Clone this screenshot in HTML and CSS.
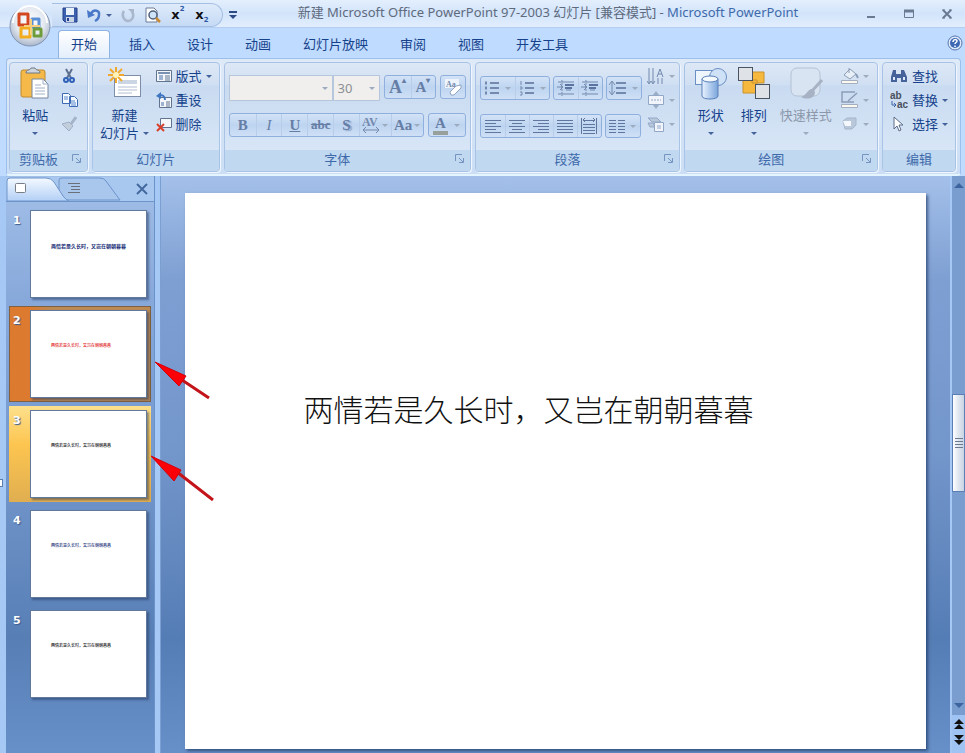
FILE: index.html
```html
<!DOCTYPE html>
<html lang="zh-CN">
<head>
  <meta charset="UTF-8" />
  <title>Microsoft PowerPoint</title>
  <link rel="stylesheet" href="styles.css">
</head>
<body>

  <!-- Title bar -->
  <header class="titlebar">
    <button class="office-btn" aria-label="Office">
      <svg width="42" height="42" viewBox="0 0 42 42">
        <defs>
          <radialGradient id="orb" cx="50%" cy="40%" r="60%">
            <stop offset="0" stop-color="#fff"/><stop offset=".6" stop-color="#e4e9f0"/><stop offset="1" stop-color="#a9b6ca"/>
          </radialGradient>
        </defs>
        <circle cx="21" cy="21" r="20" fill="url(#orb)" stroke="#8295b3"/>
        <path d="M4 18a17 17 0 0 1 34 0" fill="none" stroke="#fff" stroke-width="2"/>
        <g fill="none" stroke-width="3" stroke-linejoin="round">
          <rect x="10" y="9" width="9" height="11" stroke="#d4461f"/>
          <rect x="23" y="14" width="7" height="8" stroke="#5a8fd6"/>
          <rect x="12" y="23" width="9" height="9" stroke="#f2ac1c"/>
          <rect x="25" y="24" width="7" height="7" stroke="#6f9c3a"/>
        </g>
        <path d="M15 21h16M22 14v16" stroke="#f6cf7c" stroke-width="2"/>
      </svg>
    </button>
    <div class="quick">
      <button aria-label="保存"><svg width="16" height="16"><path d="M1 1h14v14H3l-2-2z" fill="#3c5fae" stroke="#24408a"/><path d="M4 1h8v7H4z" fill="#e9f1fb"/><path d="M4 10h8v5H4z" fill="#c9d4e6"/><path d="M5 11h2v3H5z" fill="#24408a"/></svg></button>
      <button aria-label="撤消" class="with-caret"><svg width="16" height="16"><path d="M5 6.500C8 2 14 3 13 8c0 3-2 5-4 6" fill="none" stroke="#4a78c8" stroke-width="2.500"/><path d="M1 3l1 8 7-3z" fill="#4a78c8"/></svg><i class="caret"></i></button>
      <button aria-label="恢复"><svg width="16" height="16"><path d="M4 4C1 8 4 14 8 14s7-5 4-9" fill="none" stroke="#a9b8cd" stroke-width="2.500"/><path d="M8 2h6v6z" fill="#a9b8cd"/></svg></button>
      <button aria-label="打印预览"><svg width="18" height="16"><path d="M2 1h8l3 3v11H2z" fill="#fff" stroke="#6b7c99"/><circle cx="9" cy="8" r="4" fill="#cfe4f7" stroke="#4d5f7e" stroke-width="1.500"/><path d="M12 11l4 4" stroke="#c88b32" stroke-width="2.500"/></svg></button>
      <button aria-label="上标" class="script-btn">x<sup>2</sup></button>
      <button aria-label="下标" class="script-btn">x<sub>2</sub></button>
    </div>
    <button class="customize" aria-label="自定义"><svg width="8" height="8"><path d="M0 1h8" stroke="#2c4b85" stroke-width="2"/><path d="M0 4h8L4 8z" fill="#2c4b85"/></svg></button>
    <h1 class="title">新建 Microsoft Office PowerPoint 97-2003 幻灯片 [兼容模式] - <b>Microsoft PowerPoint</b></h1>
    <div class="window-btns">
      <button aria-label="最小化"><svg width="12" height="12"><path d="M2 9h8" stroke="#6b7a90" stroke-width="2"/></svg></button>
      <button aria-label="最大化"><svg width="12" height="12"><path d="M1.500 2.500h9v7h-9z" fill="none" stroke="#6b7a90"/><path d="M1 3h10" stroke="#6b7a90" stroke-width="3"/></svg></button>
      <button aria-label="关闭"><svg width="12" height="12"><path d="M2 2l8 8M10 2l-8 8" stroke="#6b7a90" stroke-width="2"/><path d="M1 2h3M8 2h3M1 10h3M8 10h3" stroke="#6b7a90"/></svg></button>
    </div>
  </header>

  <!-- Ribbon tabs -->
  <nav class="tabs">
    <a href="#" class="tab active">开始</a>
    <a href="#" class="tab">插入</a>
    <a href="#" class="tab">设计</a>
    <a href="#" class="tab">动画</a>
    <a href="#" class="tab">幻灯片放映</a>
    <a href="#" class="tab">审阅</a>
    <a href="#" class="tab">视图</a>
    <a href="#" class="tab">开发工具</a>
    <button class="help" aria-label="帮助"><svg width="16" height="16"><circle cx="8" cy="8" r="7" fill="#dfeafa" stroke="#5577b0"/><circle cx="8" cy="8" r="5" fill="#3c68b4"/><path d="M6 7c0-3 4-3 4-1 0 1.500-2 1.500-2 3M8 10.500v1.500" fill="none" stroke="#fff" stroke-width="1.500"/></svg></button>
  </nav>

  <!-- Ribbon -->
  <section class="ribbon">
    <div class="group">
      <div class="group-body">
        <button class="big">
          <svg width="34" height="34"><rect x="3" y="4" width="24" height="27" rx="2" fill="#f5b94a" stroke="#c18a2c"/><path d="M8 7c0-4 4-2 5-5h4c1 3 5 1 5 5z" fill="#cfd5de" stroke="#6f7886"/><path d="M14 13h11l5 5v14H14z" fill="#fff" stroke="#75869f"/><path d="M25 13v5h5M17 19h6M17 22h10M17 25h10M17 28h10" fill="none" stroke="#9fb0c8"/></svg>
          <span>粘贴</span><i class="caret"></i>
        </button>
        <div class="stack">
          <button aria-label="剪切"><svg width="16" height="16"><path d="M5 1l5 9M11 1L6 10" stroke="#5d6f8e" stroke-width="2"/><circle cx="5" cy="12" r="2" fill="none" stroke="#2f62b8" stroke-width="2"/><circle cx="11" cy="12" r="2" fill="none" stroke="#2f62b8" stroke-width="2"/></svg></button>
          <button aria-label="复制"><svg width="18" height="16"><path d="M1.500 1.500h6l2 2v8h-8zM8.500 4.500h5l3 3v7h-8z" fill="#f4f9ff" stroke="#3c6ab5"/><path d="M3 5h4M3 7h4M10 9h4M10 11h5M10 13h5" stroke="#5b88cc"/></svg></button>
          <button aria-label="格式刷"><svg width="16" height="16"><path d="M15 1l-5 7" stroke="#a5b3c8" stroke-width="3"/><path d="M1 8l7-2 4 4-4 5z" fill="#c3cedd" stroke="#a0afc5"/></svg></button>
        </div>
      </div>
      <h2 class="group-label with-launcher">剪贴板<svg class="launcher" width="9" height="9"><use href="#launch"/></svg></h2>
    </div>

    <div class="group">
      <div class="group-body">
        <button class="big">
          <svg width="36" height="34"><rect x="7.500" y="9.500" width="26" height="21" fill="#fff" stroke="#7e8ea7"/><path d="M11 14h19v4H11z" fill="#cbd5e4"/><path d="M11 21h19M11 24h19M11 27h14" stroke="#b1bfd3"/><path d="M9 1v16M1 9h16M3 3l12 12M15 3L3 15" stroke="#f0a92c" stroke-width="2"/><circle cx="9" cy="9" r="3" fill="#fff3b8"/></svg>
          <span>新建</span><span>幻灯片<i class="caret"></i></span>
        </button>
        <div class="stack">
          <button><svg width="16" height="16"><path d="M.5 2.500h15v11H.5z" fill="#f3f7fc" stroke="#60738f"/><path d="M2 5h12" stroke="#7b91b3" stroke-width="2"/><path d="M3 7h4v5H3z" fill="#9eb3d2"/><path d="M9 8h5M9 10h5M9 12h5" stroke="#60738f"/></svg>版式<i class="caret"></i></button>
          <button><svg width="16" height="16"><path d="M3.500 5.500h12v10h-12z" fill="#f3f7fc" stroke="#60738f"/><path d="M5 10h3v4H5z" fill="#9eb3d2"/><path d="M10 10h4M10 12h4M10 14h4" stroke="#60738f"/><path d="M3 4c3-2 6 0 6 4" fill="none" stroke="#3f76c4" stroke-width="2"/><path d="M0 4l5-4v7z" fill="#3f76c4"/></svg>重设</button>
          <button><svg width="16" height="16"><path d="M4.500 2.500h11v9h-11z" fill="#f3f7fc" stroke="#60738f"/><path d="M1 8l7 7M8 8l-7 7" stroke="#d9402b" stroke-width="2"/></svg>删除</button>
        </div>
      </div>
      <h2 class="group-label">幻灯片</h2>
    </div>

    <div class="group">
      <div class="group-body rows disabled">
        <div class="row">
          <div class="combo">
            <label class="combo-font"><select aria-label="字体"><option></option></select><i class="caret"></i></label>
            <label class="combo-size"><select aria-label="字号"><option>30</option></select><i class="caret"></i></label>
          </div>
          <div class="btns">
            <button class="glyph large" aria-label="增大字号">A<sup>▴</sup></button>
            <button class="glyph" aria-label="减小字号">A<sup>▾</sup></button>
          </div>
          <div class="btns"><button aria-label="清除格式"><svg width="18" height="18"><path d="M1 1h14v9H1z" fill="#eef4fc"/><text x="2" y="9" class="tiny">Aa</text><path d="M6 14l6-6 5-1v3l-7 7H7z" fill="#fff" stroke="#8fa3c2"/></svg></button></div>
        </div>
        <div class="row">
          <div class="btns fill">
            <button class="glyph"><b>B</b></button>
            <button class="glyph"><em>I</em></button>
            <button class="glyph"><u>U</u></button>
            <button class="glyph"><s>abc</s></button>
            <button class="glyph shadow"><b>S</b></button>
            <button class="glyph wide"><svg width="18" height="18"><text x="0" y="10" class="tiny big-tiny">AV</text><path d="M1 14h16M4 11l-3 3 3 3M14 11l3 3-3 3" fill="none" stroke="#7389ad"/></svg><i class="caret"></i></button>
            <button class="glyph wide">Aa<i class="caret"></i></button>
          </div>
          <div class="btns"><button class="glyph color"><span>A</span><i class="caret"></i></button></div>
        </div>
      </div>
      <h2 class="group-label with-launcher">字体<svg class="launcher" width="9" height="9"><use href="#launch"/></svg></h2>
    </div>

    <div class="group">
      <div class="group-body tight disabled">
        <div class="rows para">
          <div class="row">
            <div class="btns">
              <button class="mid" aria-label="项目符号"><svg width="16" height="16"><path d="M6 3h9M6 8h9M6 13h9" stroke="#7389ad" stroke-width="2"/><path d="M1 3h2M1 8h2M1 13h2" stroke="#7389ad" stroke-width="3"/></svg><i class="caret"></i></button>
              <button class="mid" aria-label="编号"><svg width="16" height="16"><path d="M6 3h9M6 8h9M6 13h9" stroke="#7389ad" stroke-width="2"/><path d="M2 1v4M1 7h2v2H1M1 12h2v3H1" fill="none" stroke="#7389ad"/></svg><i class="caret"></i></button>
            </div>
            <div class="btns">
              <button aria-label="减少缩进"><svg width="18" height="18"><use href="#indent"/></svg></button>
              <button aria-label="增加缩进"><svg width="18" height="18"><use href="#indent"/></svg></button>
            </div>
            <div class="btns"><button class="mid" aria-label="行距"><svg width="18" height="16"><path d="M7 3h10M7 8h10M7 13h10" stroke="#7389ad" stroke-width="2"/><path d="M3 2v12M0 5l3-4 3 4M0 11l3 4 3-4" fill="none" stroke="#7389ad"/></svg><i class="caret"></i></button></div>
          </div>
          <div class="row">
            <div class="btns">
              <button aria-label="左对齐"><svg width="16" height="14"><path d="M0 1.500h16M0 4.500h11M0 7.500h16M0 10.500h11M0 13.500h16" stroke="#5f779f"/></svg></button>
              <button aria-label="居中"><svg width="16" height="14"><path d="M0 1.500h16M3 4.500h10M0 7.500h16M3 10.500h10M0 13.500h16" stroke="#5f779f"/></svg></button>
              <button aria-label="右对齐"><svg width="16" height="14"><path d="M0 1.500h16M5 4.500h11M0 7.500h16M5 10.500h11M0 13.500h16" stroke="#5f779f"/></svg></button>
              <button aria-label="两端对齐"><svg width="16" height="14"><path d="M0 1.500h16M0 4.500h16M0 7.500h16M0 10.500h16M0 13.500h16" stroke="#5f779f"/></svg></button>
              <button aria-label="分散对齐"><svg width="18" height="18"><path d="M1.500 1v16M16.500 1v16M3 3.500h12M5 1L3 3l2 2M13 1l2 2-2 2M3 7.500h12M3 10.500h12M3 13.500h12M3 16.500h12" fill="none" stroke="#5f779f"/></svg></button>
            </div>
            <div class="btns"><button class="mid" aria-label="分栏"><svg width="16" height="14"><path d="M0 1.500h7M0 4.500h7M0 7.500h7M0 10.500h7M0 13.500h7M9 1.500h7M9 4.500h7M9 7.500h7M9 10.500h7M9 13.500h7" stroke="#5f779f"/></svg><i class="caret"></i></button></div>
          </div>
        </div>
        <div class="stack">
          <button aria-label="文字方向"><svg width="18" height="18"><path d="M2 1v15M6 1v15M0 14l2 3 2-3M4 14l2 3 2-3M10 10l3-8 3 8M11 7h4M11 11v6M15 11v6" fill="none" stroke="#7389ad"/></svg><i class="caret"></i></button>
          <button aria-label="对齐文本"><svg width="18" height="18"><path d="M1.500 4.500h15v9h-15z" fill="#f1f5fb" stroke="#93a7c6"/><path d="M4 9h10" stroke="#93a7c6" stroke-dasharray="2 1"/><path d="M6 4l3-4 3 4zM6 14l3 4 3-4z" fill="#9bacc6"/></svg><i class="caret"></i></button>
          <button aria-label="SmartArt"><svg width="18" height="18"><path d="M1 3h9l4 4H5zM1 8h6v4H3z" fill="#b9c7db" stroke="#93a7c6"/><path d="M7.500 7.500h9v9h-9z" fill="#f1f5fb" stroke="#93a7c6"/><path d="M10 11h4M10 13h4" stroke="#93a7c6"/></svg><i class="caret"></i></button>
        </div>
      </div>
      <h2 class="group-label with-launcher">段落<svg class="launcher" width="9" height="9"><use href="#launch"/></svg></h2>
    </div>

    <div class="group">
      <div class="group-body">
        <button class="big">
          <svg width="34" height="34"><defs><linearGradient id="cyl"><stop offset="0" stop-color="#e9f3ff"/><stop offset="1" stop-color="#7aa5dc"/></linearGradient></defs><rect x="1.500" y="4.500" width="17" height="14" fill="#eef5fd" stroke="#6a8fc4"/><circle cx="24" cy="11" r="8.500" fill="#cfe1f6" stroke="#6a8fc4"/><path d="M8 13v17c0 4 16 4 16 0V13z" fill="url(#cyl)" stroke="#5a80b9"/><ellipse cx="16" cy="13" rx="8" ry="3" fill="#f5faff" stroke="#5a80b9"/></svg>
          <span>形状</span><i class="caret"></i>
        </button>
        <button class="big">
          <svg width="34" height="34"><path d="M15 6h12v11H15zM6 14h14v13H6z" fill="#f6b93d" stroke="#ca922c"/><rect x="1.500" y="1.500" width="14" height="13" fill="#dfe3e8" stroke="#4a5362"/><rect x="18.500" y="18.500" width="14" height="14" fill="#dfe3e8" stroke="#4a5362"/></svg>
          <span>排列</span><i class="caret"></i>
        </button>
        <button class="big disabled" disabled>
          <svg width="36" height="34"><rect x="3" y="2" width="29" height="28" rx="6" fill="#d9e4f2" stroke="#b4c1d3"/><path d="M34 14L24 25" stroke="#a7b3c4" stroke-width="3"/><path d="M25 23c-5-1-6 6-12 8 5 3 14 2 14-5z" fill="#a7b3c4"/></svg>
          <span>快速样式</span><i class="caret"></i>
        </button>
        <div class="stack disabled">
          <button aria-label="形状填充"><svg width="18" height="18"><path d="M3 8l6-6 6 5-6 5zM8 1v5" fill="#e9eff7" stroke="#8b9db8"/><path d="M15 7l2 4" stroke="#8b9db8" stroke-width="2"/><path d="M.5 13.500h16v3H.5z" fill="#faf8ef" stroke="#a3afc0"/></svg><i class="caret"></i></button>
          <button aria-label="形状轮廓"><svg width="18" height="18"><path d="M14 1H1v10h12M16 2L7 10" fill="none" stroke="#8b9db8" stroke-width="1.500"/><path d="M.5 13.500h16v3H.5z" fill="#faf8ef" stroke="#a3afc0"/></svg><i class="caret"></i></button>
          <button aria-label="形状效果"><svg width="18" height="18"><path d="M2 6l4-3h9v7l-4 4H4z" fill="#b9c7da" stroke="#a6b6cb"/><path d="M2 6h8v5H4z" fill="#f4f7fb"/></svg><i class="caret"></i></button>
        </div>
      </div>
      <h2 class="group-label with-launcher">绘图<svg class="launcher" width="9" height="9"><use href="#launch"/></svg></h2>
    </div>

    <div class="group">
      <div class="group-body">
        <div class="stack">
          <button><svg width="18" height="16"><path d="M3 2h3v4h5V2h3l3 7v5h-6v-4H7v4H1V9z" fill="#46629a"/><path d="M3 9h2v3H3zM13 9h2v3h-2z" fill="#dbe8fa"/></svg>查找</button>
          <button><svg width="18" height="18"><text x="0" y="8" class="ab">ab</text><text x="7" y="17" class="ab">ac</text><path d="M2 10v4h4M4 12l2 2-2 2" fill="none" stroke="#3d62a8"/></svg>替换<i class="caret"></i></button>
          <button><svg width="18" height="16"><path d="M4 1v12l3-3 2 5 2-1-2-5h4z" fill="#fff" stroke="#5b6c88"/></svg>选择<i class="caret"></i></button>
        </div>
      </div>
      <h2 class="group-label">编辑</h2>
    </div>
  </section>

  <!-- Workspace -->
  <main class="workspace">
    <div class="grip"></div>
    <aside class="panel">
      <div class="panel-tabs">
        <svg width="118" height="24" viewBox="0 0 118 24"><defs><linearGradient id="pt" x2="0" y2="1"><stop offset="0" stop-color="#f4f9ff"/><stop offset="1" stop-color="#b3d0f6"/></linearGradient></defs><path d="M53 23V3q0-2 3-2h38q4 0 6 3l14 19z" fill="#a9c6ec" stroke="#6d94cb"/><path d="M1 24V4q0-3 3-3h36q5 0 8 4l9 14q3 4 6 5z" fill="url(#pt)" stroke="#6d94cb"/><rect x="9.500" y="6.500" width="10" height="9" rx="1" fill="#fff" stroke="#7a7f87"/><path d="M62 6.500h12M65 9.500h9M65 12.500h9M62 15.500h12" stroke="#6b7078"/></svg>
        <button aria-label="关闭"><svg width="12" height="12"><path d="M1 1l10 10M11 1L1 11" stroke="#44699f" stroke-width="2"/></svg></button>
      </div>
      <ol class="thumbs">
        <li class="thumb"><span>1</span><p class="mini bold navy">两情若是久长时，又岂在朝朝暮暮</p></li>
        <li class="thumb selected"><span>2</span><p class="mini red">两情若是久长时，又岂在朝朝暮暮</p></li>
        <li class="thumb hover"><span>3</span><p class="mini">两情若是久长时，又岂在朝朝暮暮</p></li>
        <li class="thumb"><span>4</span><p class="mini navy">两情若是久长时，又岂在朝朝暮暮</p></li>
        <li class="thumb"><span>5</span><p class="mini">两情若是久长时，又岂在朝朝暮暮</p></li>
      </ol>
    </aside>
    <div class="stage">
      <article class="slide"><p>两情若是久长时，又岂在朝朝暮暮</p></article>
    </div>
    <div class="scrollbar">
      <svg class="arrow-up" width="10" height="6"><path d="M0 6h10L5 1z" fill="#3c659f"/></svg>
      <div class="track"><div class="handle"></div></div>
      <svg width="10" height="6"><path d="M0 0h10L5 5z" fill="#3c659f"/></svg>
      <div class="jump">
        <svg width="10" height="10"><path d="M0 5h10L5 0zM0 10h10L5 5z" fill="#111"/></svg>
        <svg width="10" height="10"><path d="M0 0h10L5 5zM0 5h10l-5 5z" fill="#111"/></svg>
      </div>
    </div>

    <!-- Callout arrows over the thumbnails -->
    <svg class="callouts" width="64" height="142" viewBox="0 0 64 142">
      <path d="M28 19l30 20M26 113l36 28" stroke="#c3141b" stroke-width="3"/>
      <path d="M4 3l31 14-7 10zM0 97l30 14-7 11z" fill="#fb0007" stroke="#d3000b"/>
    </svg>
  </main>

  <svg width="0" height="0" class="sprite">
    <symbol id="launch" viewBox="0 0 9 9"><path d="M.5 7V.5H7M4 4l4 4M8.500 4v4.500H4" fill="none" stroke="#7694c0"/></symbol>
    <symbol id="indent" viewBox="0 0 18 18"><path d="M5 1v16" stroke="#7389ad" stroke-dasharray="2 1"/><path d="M1 3h16M9 11h5M1 15h16" stroke="#7389ad"/><path d="M8 6h9M8 9h7" stroke="#5b73a0" stroke-width="2"/><path d="M0 8h6M3 5l3 3-3 3" fill="none" stroke="#7389ad"/></symbol>
  </svg>

</body>
</html>
```
FILE: styles.css
```css
* { margin: 0; padding: 0; box-sizing: border-box; }

body {
  min-height: 100vh;
  display: flex;
  flex-direction: column;
  overflow: hidden;
  background: #bfdbff;
  color: #15428b;
  font-family: "Noto Sans", "Noto Sans CJK SC", sans-serif;
  font-size: 13px;
  line-height: 18px;
}

button {
  display: flex;
  align-items: center;
  justify-content: center;
  background: none;
  border: 0;
  color: inherit;
  font: inherit;
  white-space: nowrap;
}

svg { display: block; flex: none; }
.sprite { position: absolute; }

.caret {
  flex: none;
  display: inline-block;
  width: 0;
  height: 0;
  border: 3px solid transparent;
  border-top-color: #44639a;
  border-bottom: 0;
}

/* title bar */
.titlebar {
  position: relative;
  height: 28px;
  display: flex;
  align-items: center;
  padding: 3px 0 0 52px;
  background: linear-gradient(#e4effd, #d2e4fb 50%, #e2eefd);
  border-bottom: 1px solid #b4cdf0;
}

.office-btn {
  position: absolute;
  left: 9px;
  top: 5px;
  z-index: 2;
}

.quick {
  height: 24px;
  display: flex;
  align-items: center;
  gap: 8px;
  padding: 0 12px 0 10px;
  background: linear-gradient(#dfebfa, #c5daf5);
  border: 1px solid #a3bfe4;
  border-left: 0;
  border-radius: 0 12px 12px 0;
}

.with-caret { gap: 4px; }

.script-btn {
  width: 16px;
  color: #111;
  font-family: "DejaVu Sans", sans-serif;
  font-weight: bold;
}

.script-btn sup, .script-btn sub {
  font-size: 7px;
  line-height: 7px;
  color: #2c57a6;
}
.script-btn sup { align-self: flex-start; }
.script-btn sub { align-self: flex-end; }

.customize { margin-left: 6px; }

.title {
  flex: 1;
  text-align: center;
  padding: 0 6px 6px 0;
  font-size: 13px;
  font-weight: normal;
  color: #5f6b7d;
  white-space: nowrap;
}

.title b { font-weight: normal; color: #3e6aaa; }

.window-btns {
  display: flex;
  gap: 26px;
  padding: 0 12px 2px 0;
}

/* ribbon tabs */
.tabs {
  height: 30px;
  display: flex;
  align-items: flex-end;
  gap: 6px;
  padding: 0 2px 0 58px;
}

.tab {
  height: 28px;
  padding: 4px 12px 0;
  border: 1px solid transparent;
  color: #15428b;
  text-decoration: none;
}

.tab.active {
  background: linear-gradient(#fff, #e3eefb);
  border-color: #8fb3e3;
  border-bottom: 0;
  border-radius: 4px 4px 0 0;
}

.help { margin-left: auto; align-self: center; }

/* ribbon */
.ribbon {
  display: grid;
  grid-template-columns: 79fr 128fr 247fr 206fr 194fr 74fr;
  gap: 4px;
  margin: 0 4px 0 6px;
  padding: 3px 4px 2px 2px;
  background: linear-gradient(#dfeaf8, #cbdef5);
  border: 1px solid #9dbfeb;
  border-bottom: 2px solid #e4f5ff;
  border-radius: 4px;
}

.group {
  min-width: 0;
  display: flex;
  flex-direction: column;
  border: 1px solid #a8c3e6;
  border-radius: 4px;
  background: linear-gradient(#dde8f6, #d0dff2 20%, #c9dbf1 21%, #dce9f8);
  box-shadow: 1px 1px 0 #eff6fe;
  overflow: hidden;
}

.group-body {
  height: 87px;
  display: flex;
  align-items: flex-start;
  justify-content: space-around;
  padding: 1px 4px;
}

.group-body.tight { justify-content: space-between; }

.group-label {
  position: relative;
  height: 21px;
  background: #c1d8f1;
  color: #3e6aaa;
  font-size: 13px;
  font-weight: normal;
  text-align: center;
}

.with-launcher { padding-right: 20px; }
.launcher { position: absolute; right: 6px; top: 4px; }

.big {
  flex-direction: column;
  justify-content: flex-start;
  padding-top: 2px;
}

.big svg { margin-bottom: 6px; }
.big > .caret { margin-top: 8px; }
.big span .caret { margin: 0 0 3px 4px; }
.big.disabled { color: #8c98aa; }

.stack {
  display: flex;
  flex-direction: column;
}

.stack button {
  height: 24px;
  gap: 4px;
  justify-content: flex-start;
}

.disabled .caret, .disabled.big .caret { border-top-color: #9dabbf; }

.rows {
  display: flex;
  flex-direction: column;
  gap: 12px;
}

.group-body.rows {
  align-items: stretch;
  justify-content: flex-start;
}

.group-body.rows, .para { padding-top: 12px; }

.row { display: flex; gap: 3px; height: 26px; }
.group-body.rows .row { gap: 4px; }

.combo { flex: 1; display: flex; }

.combo label {
  position: relative;
  border: 1px solid #b6c6dc;
  background: #f0efed;
}

.combo-font { flex: 7; }
.combo-size { flex: 3; }

.combo select {
  width: 100%;
  height: 100%;
  padding-left: 3px;
  appearance: none;
  border: 0;
  background: none;
  color: #8c8f94;
  font: inherit;
}

.combo .caret {
  position: absolute;
  right: 4px;
  top: 11px;
}

.btns {
  height: 24px;
  display: flex;
  border: 1px solid #8fb0de;
  border-radius: 3px;
  background: linear-gradient(#d3e3f7, #bdd4f0 50%, #cfe0f6);
}

.btns.fill { flex: 1; }
.btns.fill button { flex: 1 1 26px; }
.btns.fill .wide { flex-basis: 32px; }

.btns button {
  width: 24px;
  gap: 2px;
  color: #667ea6;
}

.btns button + button { border-left: 1px solid #b7cdea; }
.btns .mid { width: 34px; }
.para .mid { gap: 5px; }

.btns .glyph {
  font-family: "Liberation Serif", serif;
  font-size: 15px;
  font-weight: bold;
}
.btns .glyph.large { width: 26px; font-size: 18px; }
.btns .glyph sup { align-self: flex-start; font-size: 8px; line-height: 10px; }
.glyph.large, .glyph.large + .glyph { gap: 0; }
.btns .glyph s { font-size: 13px; }
.glyph em { font-weight: normal; }
.glyph.shadow b { text-shadow: 2px 1px 1px #8ea5c9; }
.btns .color { width: 36px; gap: 6px; }
.color span { line-height: 15px; border-bottom: 4px solid #98a09c; padding: 0 2px; }

.tiny { font: bold 8px "Liberation Serif", serif; fill: #7389ad; }
.big-tiny { font-size: 12px; }
.ab { font: bold 10px "Liberation Sans", sans-serif; fill: #4a505c; }

/* workspace */
.workspace {
  flex: 1;
  position: relative;
  display: flex;
  padding-left: 6px;
  background: #a6c8f4;
}

.grip {
  position: absolute;
  left: -1px;
  top: 303px;
  width: 4px;
  height: 8px;
  background: #fff;
  border: 1px solid #5b7db0;
}

.panel {
  width: 149px;
  flex: none;
  padding-top: 1px;
  background: linear-gradient(#a3c0e8, #86a8da 22%, #7699ce 48%, #577fb6 80%, #6890c8);
  border-right: 1px solid #6b93cb;
}

.panel-tabs {
  display: flex;
  align-items: center;
  justify-content: space-between;
  padding-right: 6px;
  background: #a9c8f0;
  border-bottom: 1px solid #6d94cb;
}

.thumbs {
  display: flex;
  flex-direction: column;
  gap: 4px;
  padding: 4px 3px;
  list-style: none;
}

.thumb {
  height: 96px;
  display: flex;
  justify-content: space-between;
  padding: 4px;
  color: #fff;
  font: bold 11px/22px "DejaVu Sans", sans-serif;
  text-shadow: 1px 1px 1px #3d5c8e;
}

.selected {
  background: linear-gradient(90deg, #dc7a30, #dc7a30 14%, #bb8a55 30%);
  box-shadow: inset 0 0 0 1px #80613f;
}

.hover { background: linear-gradient(#fde08c, #fdc550 40%, #e0ae50); }

.mini {
  width: 117px;
  height: 88px;
  padding: 32px 0 0 20px;
  background: #fff;
  border: 1px solid #61799c;
  box-shadow: 2px 2px 2px rgba(30, 50, 90, .5);
  color: #111;
  font: 500 4px/5px "Noto Sans CJK SC", sans-serif;
  text-shadow: none;
  white-space: nowrap;
}

.mini.bold { font-size: 5px; font-weight: bold; }
.mini.navy { color: #1a2f78; }
.mini.red { color: #e02020; }

.stage {
  flex: 1;
  margin-left: 5px;
  padding: 17px 24px 0;
  border-left: 1px solid #7c9fd2;
  background: linear-gradient(#a4c0ea, #7e9fd2 18%, #7396cb 48%, #557db5 80%, #6890c8);
}

.slide {
  aspect-ratio: 4 / 3;
  background: #fff;
  box-shadow: 2px 2px 3px rgba(30, 55, 100, .7);
  display: flex;
  flex-direction: column;
}

.slide p {
  padding: 26% 0 0 16%;
  color: #111;
  font: 300 30px/44px "Noto Sans CJK SC", sans-serif;
  white-space: nowrap;
}

.scrollbar {
  width: 15px;
  display: flex;
  flex-direction: column;
  align-items: center;
  background: #7a9dd0;
  border-left: 2px solid #a6c8f4;
}

.arrow-up { margin: 6px 0; }

.track { flex: 1; width: 100%; padding-top: 200px; }

.handle {
  height: 98px;
  border: 1px solid #5a7fb6;
  background:
    repeating-linear-gradient(#6c7a90 0 1px, transparent 1px 3px) center / 8px 10px no-repeat,
    linear-gradient(90deg, #fff, #dfe6ef 50%, #c9d4e3);
}

.jump {
  width: 100%;
  display: flex;
  flex-direction: column;
  align-items: center;
  gap: 6px;
  margin-top: 6px;
  padding: 4px 0 8px;
  background: #9fc3f3;
}

.callouts {
  position: absolute;
  left: 151px;
  top: 183px;
}
```
